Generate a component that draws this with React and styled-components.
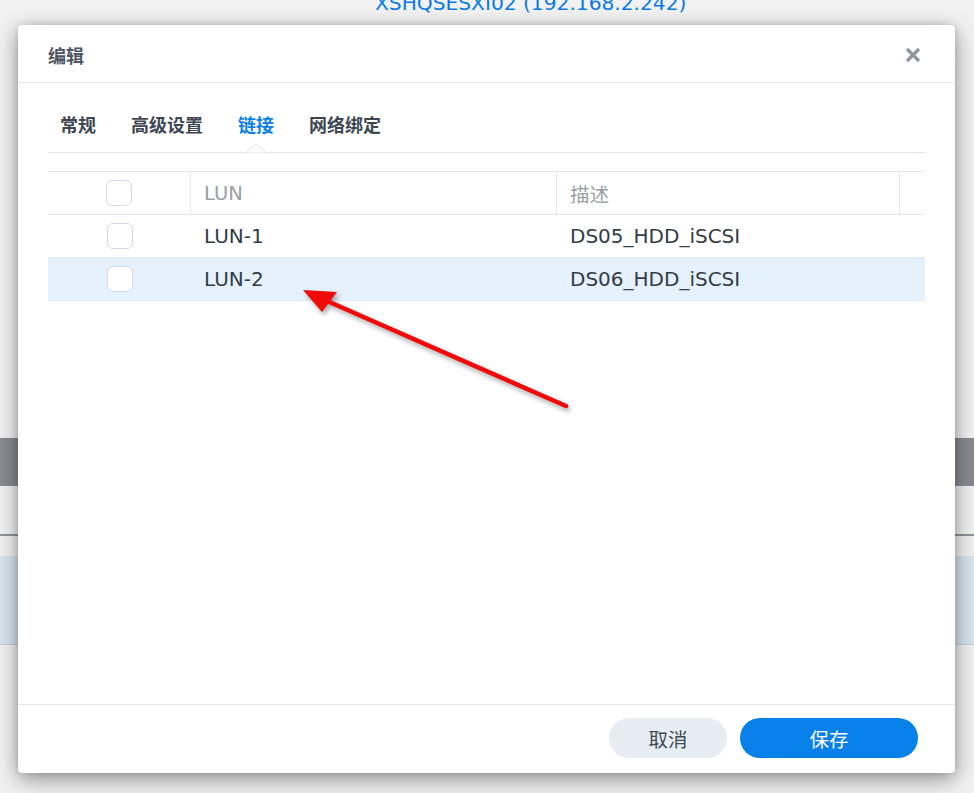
import React from "react";
import styled, { createGlobalStyle } from "styled-components";

const Global = createGlobalStyle`
  html, body { margin: 0; padding: 0; }
  body {
    background: #f2f2f2;
    font-family: "DejaVu Sans", "Noto Sans CJK SC", sans-serif;
    overflow: hidden;
  }
`;

const Page = styled.div`
  position: relative;
  width: 974px;
  height: 793px;
  overflow: hidden;
  background: #f2f2f2;
  display: flex;
  flex-direction: column;
`;

const HostTitle = styled.div`
  margin-top: -9px;
  padding-left: 375px;
  font-size: 20.2px;
  line-height: 25px;
  color: #0a7be6;
  white-space: nowrap;
`;

const Spacer = styled.div`
  height: ${(p) => p.$h}px;
  flex-shrink: 0;
`;

const Band = styled.div`
  height: ${(p) => p.$h}px;
  background: ${(p) => p.$bg};
  flex-shrink: 0;
`;

const Dialog = styled.div`
  position: absolute;
  left: 18px;
  top: 25px;
  width: 937px;
  height: 748px;
  background: #fff;
  border-radius: 4px;
  box-shadow: 0 6px 22px rgba(0, 0, 0, 0.42), 0 0 6px rgba(0, 0, 0, 0.12);
  display: flex;
  flex-direction: column;
`;

const Header = styled.div`
  height: 58px;
  box-sizing: border-box;
  border-bottom: 1px solid #e3e8ee;
  display: flex;
  align-items: center;
  justify-content: space-between;
  padding: 0 34px 0 30px;
`;

const Title = styled.div`
  font-size: 18px;
  font-weight: bold;
  color: #4c5560;
  font-family: "Noto Sans CJK SC", sans-serif;
  padding-top: 2px;
`;

const CloseBtn = styled.div`
  width: 16px;
  height: 16px;
  display: flex;
  margin-top: 2px;
`;

const Body = styled.div`
  flex: 1;
  padding: 0 30px;
  display: flex;
  flex-direction: column;
`;

const TabBar = styled.div`
  position: relative;
  height: 70px;
  box-sizing: border-box;
  border-bottom: 1px solid #dbe3ec;
  display: flex;
  align-items: flex-end;
  gap: 35px;
  padding: 0 0 16px 12px;
`;

const Tab = styled.div`
  position: relative;
  font-family: "Noto Sans CJK SC", sans-serif;
  font-size: 18px;
  font-weight: bold;
  line-height: 24px;
  color: ${(p) => (p.$active ? "#0a7fe8" : "#3e4852")};
`;

const Notch = styled.svg`
  position: absolute;
  left: 50%;
  bottom: -17px;
  transform: translateX(-50%);
`;

const Table = styled.div`
  margin-top: 18px;
  border-top: 1px solid #e3e8ee;
  display: flex;
  flex-direction: column;
`;

const Row = styled.div`
  display: grid;
  grid-template-columns: 143px 366px 343px 25px;
  height: 43px;
  box-sizing: border-box;
  border-bottom: 1px solid #e3e8ee;
  background: ${(p) => (p.$selected ? "#e5f1fc" : "#fff")};
`;

const Cell = styled.div`
  display: flex;
  align-items: center;
  justify-content: ${(p) => (p.$center ? "center" : "flex-start")};
  padding-left: ${(p) => (p.$center ? 0 : 13)}px;
  border-right: ${(p) => (p.$sep ? "1px solid #e3e8ee" : "none")};
  font-size: ${(p) => (p.$head ? 19.5 : 20)}px;
  color: ${(p) => (p.$head ? "#9aa0a6" : "#333c48")};
  white-space: nowrap;
  font-family: "DejaVu Sans", "Noto Sans CJK SC", sans-serif;
`;

const Check = styled.div`
  width: 26px;
  height: 26px;
  box-sizing: border-box;
  border: 1.5px solid #d3dce7;
  border-radius: 6px;
  background: #fff;
`;

const Footer = styled.div`
  height: 69px;
  box-sizing: border-box;
  border-top: 1px solid #e3e8ee;
  display: flex;
  align-items: flex-start;
  justify-content: flex-end;
  gap: 13px;
  padding: 13px 37px 0 0;
`;

const Button = styled.div`
  width: ${(p) => p.$w}px;
  height: 40px;
  border-radius: 20px;
  display: flex;
  align-items: center;
  justify-content: center;
  font-family: "Noto Sans CJK SC", sans-serif;
  font-size: 19.5px;
  background: ${(p) => (p.$primary ? "#0780ea" : "#e8edf4")};
  color: ${(p) => (p.$primary ? "#ffffff" : "#414b55")};
`;

const ArrowLayer = styled.svg`
  position: absolute;
  left: 0;
  top: 0;
  pointer-events: none;
  filter: drop-shadow(2px 3px 2.5px rgba(0, 0, 0, 0.35));
`;

const rows = [
  { lun: "LUN-1", desc: "DS05_HDD_iSCSI", selected: false },
  { lun: "LUN-2", desc: "DS06_HDD_iSCSI", selected: true },
];

const tabs = ["常规", "高级设置", "链接", "网络绑定"];

export default function App() {
  return (
    <>
      <Global />
      <Page>
        <HostTitle>XSHQSESXI02 (192.168.2.242)</HostTitle>
        <Spacer $h={422} />
        <Band $h={48} $bg="#888c91" />
        <Spacer $h={48} />
        <Band $h={2} $bg="#8f959c" />
        <Spacer $h={20} />
        <Band $h={88} $bg="#d9e4ee" />
        <Band $h={1} $bg="#c6d1db" />

        <Dialog>
          <Header>
            <Title>编辑</Title>
            <CloseBtn>
              <svg width="16" height="16" viewBox="0 0 16 16">
                <path
                  d="M2 2 L14 14 M14 2 L2 14"
                  stroke="#8f969e"
                  strokeWidth="3.2"
                  strokeLinecap="butt"
                />
              </svg>
            </CloseBtn>
          </Header>
          <Body>
            <TabBar>
              {tabs.map((t) => (
                <Tab key={t} $active={t === "链接"}>
                  {t}
                  {t === "链接" && (
                    <Notch width="20" height="10" viewBox="0 0 20 10">
                      <path d="M0 9.5 L10 0.5 L20 9.5" fill="#fff" stroke="#dbe3ec" strokeWidth="1" />
                    </Notch>
                  )}
                </Tab>
              ))}
            </TabBar>
            <Table>
              <Row>
                <Cell $center $sep $head>
                  <Check />
                </Cell>
                <Cell $sep $head>LUN</Cell>
                <Cell $sep $head>描述</Cell>
                <Cell $head />
              </Row>
              {rows.map((r) => (
                <Row key={r.lun} $selected={r.selected}>
                  <Cell $center>
                    <Check />
                  </Cell>
                  <Cell>{r.lun}</Cell>
                  <Cell>{r.desc}</Cell>
                  <Cell />
                </Row>
              ))}
            </Table>
          </Body>
          <Footer>
            <Button $w={118}>取消</Button>
            <Button $w={178} $primary>保存</Button>
          </Footer>
        </Dialog>

        <ArrowLayer width="974" height="793" viewBox="0 0 974 793">
          <line x1="566" y1="406" x2="318" y2="297" stroke="#f20a0a" strokeWidth="4.5" strokeLinecap="round" />
          <polygon points="303,290 337,292 322,312" fill="#f20a0a" />
        </ArrowLayer>
      </Page>
    </>
  );
}
